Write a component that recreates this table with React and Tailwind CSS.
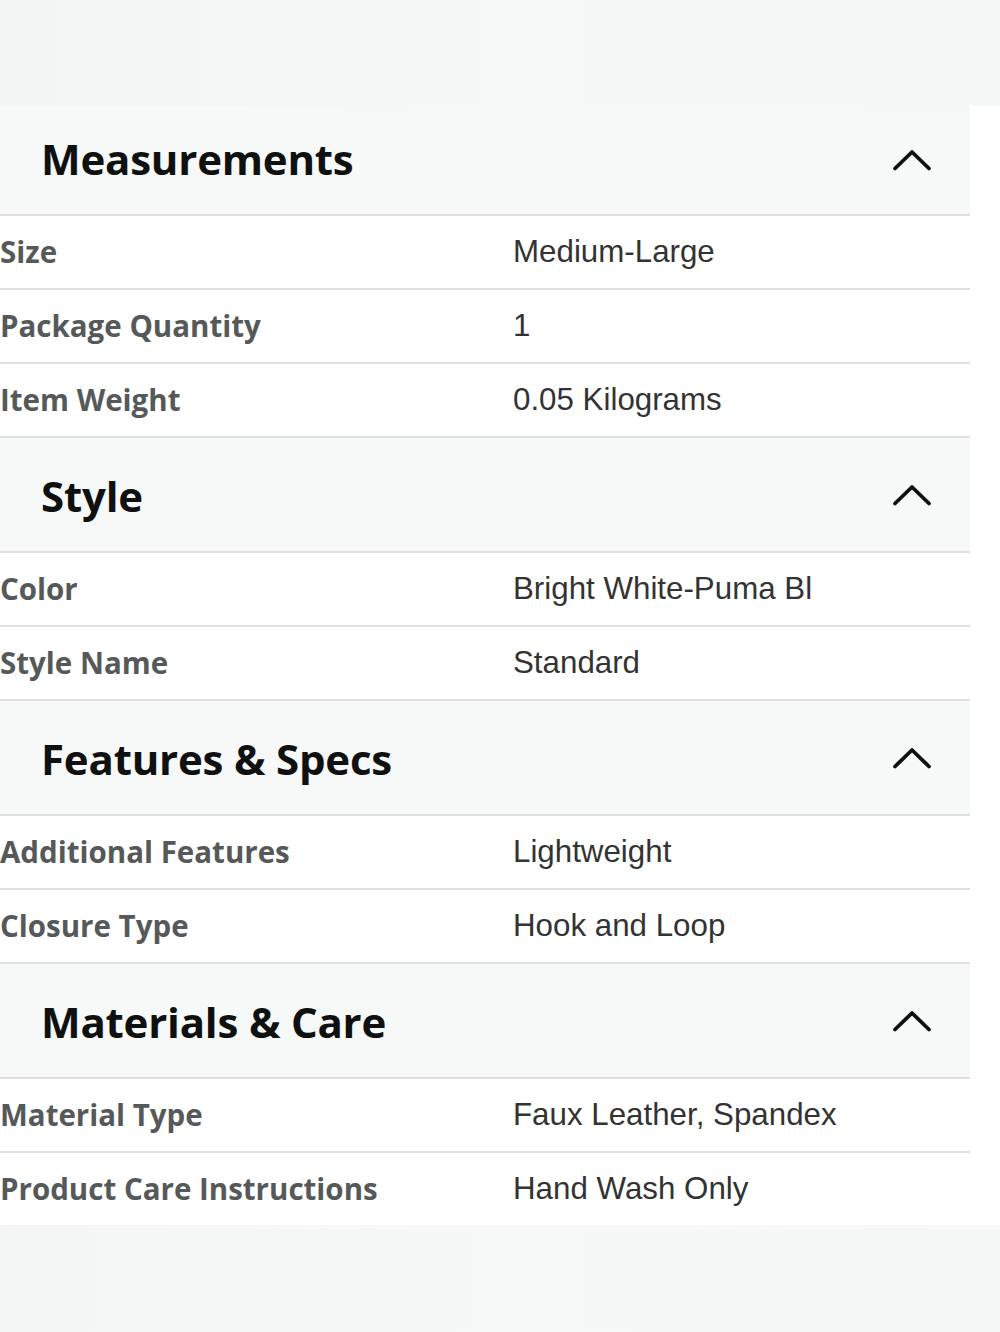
import React from "react";

const sections = [
  {
    title: "Measurements",
    rows: [
      ["Size", "Medium-Large"],
      ["Package Quantity", "1"],
      ["Item Weight", "0.05 Kilograms"],
    ],
  },
  {
    title: "Style",
    rows: [
      ["Color", "Bright White-Puma Bl"],
      ["Style Name", "Standard"],
    ],
  },
  {
    title: "Features & Specs",
    rows: [
      ["Additional Features", "Lightweight"],
      ["Closure Type", "Hook and Loop"],
    ],
  },
  {
    title: "Materials & Care",
    rows: [
      ["Material Type", "Faux Leather, Spandex"],
      ["Product Care Instructions", "Hand Wash Only"],
    ],
  },
];

function Chevron() {
  return (
    <svg width="40" height="24" viewBox="0 0 40 24" fill="none">
      <path d="M3 20.5 L20 4 L37 20.5" stroke="#0f1111" strokeWidth="3.8" strokeLinecap="round" strokeLinejoin="round" />
    </svg>
  );
}

export default function App() {
  return (
    <div className="w-[1000px] h-[1332px] flex flex-col bg-white overflow-hidden">
      <div className="h-[106px] bg-gradient-to-r from-[#f3f4f4] via-[#f7f8f8] to-[#f6f7f7]" />
      <div className="flex">
        <div className="w-[970px] flex flex-col">
          {sections.map((s, si) => (
            <div key={s.title} className="flex flex-col">
              <div
                className={
                  (si === 0 ? "h-[110px] " : "h-[115px] ") +
                  "bg-[#f7f8f8] border-b-2 border-[#dfe1e1] flex items-center justify-between pl-[41px] pr-[38px]"
                }
              >
                <span
                  className={
                    (si === 0 ? "-translate-y-[1px] " : "translate-y-[1px] ") +
                    "text-[42px] font-bold text-[#0f1111] leading-none tracking-[-0.2px]"
                  }
                  style={{ fontFamily: '"Open Sans", "Noto Sans", sans-serif' }}
                >
                  {s.title}
                </span>
                <Chevron />
              </div>
              {s.rows.map((r, ri) => {
                const last = si === sections.length - 1 && ri === s.rows.length - 1;
                return (
                  <div
                    key={r[0]}
                    className={
                      last
                        ? "h-[72px] flex items-center bg-white"
                        : "h-[74px] flex items-center bg-white border-b-2 border-[#dfe1e1]"
                    }
                  >
                    <span
                      className="w-[513px] text-[29.5px] font-bold text-[#565959] leading-none"
                      style={{ fontFamily: '"Open Sans", "Noto Sans", sans-serif' }}
                    >
                      {r[0]}
                    </span>
                    <span
                      className="text-[31.3px] text-[#333333] leading-none"
                      style={{ fontFamily: '"Liberation Sans", Arial, sans-serif' }}
                    >
                      {r[1]}
                    </span>
                  </div>
                );
              })}
            </div>
          ))}
        </div>
        <div className="flex-1 bg-white" />
      </div>
      <div className="flex-1 bg-gradient-to-r from-[#f4f5f5] via-[#f7f8f8] to-[#f6f7f7]" />
    </div>
  );
}
